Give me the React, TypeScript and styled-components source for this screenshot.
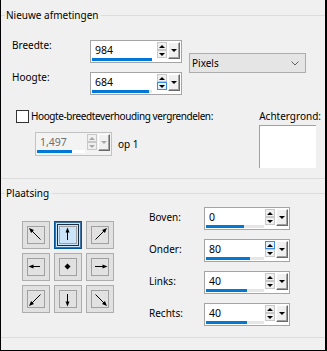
import React from "react";
import styled, { createGlobalStyle } from "styled-components";

const GlobalStyle = createGlobalStyle`
  html, body { margin: 0; padding: 0; background: #f0f0f0; }
  * { box-sizing: border-box; }
`;

const Window = styled.div`
  width: 327px;
  height: 351px;
  overflow: hidden;
  background: #f0f0f0;
  border-left: 1px solid #000;
  border-right: 2px solid #000;
  border-bottom: 1px solid #000;
  color: #000;
  font-family: "Noto Sans", "Liberation Sans", sans-serif;
  font-size: 10px;
  line-height: 14px;
`;

const Group = styled.section<{ $pb: number }>`
  border-bottom: 1px solid #dcdcdc;
  padding-bottom: ${(p) => p.$pb}px;
`;

const Legend = styled.div<{ $mt: number }>`
  display: flex;
  align-items: center;
  height: 15px;
  line-height: 15px;
  margin-top: ${(p) => p.$mt}px;
  white-space: nowrap;

  &::before {
    content: "";
    width: 4px;
    height: 1px;
    margin-right: 1px;
    background: #dcdcdc;
  }

  &::after {
    content: "";
    flex: 1;
    height: 1px;
    margin-left: 3px;
    background: #dcdcdc;
  }
`;

/* ---------- size section ---------- */

const SizeGrid = styled.div`
  display: grid;
  grid-template-columns: 78px 92px 124px;
  grid-template-rows: 23px 23px;
  row-gap: 9px;
  margin: 17px 0 0 11px;
`;

const TopLabel = styled.div`
  align-self: start;
  margin-top: -2px;
`;

const Select = styled.div`
  grid-column: 3;
  grid-row: 1 / 3;
  align-self: start;
  margin: 13px 0 0 7px;
  height: 20px;
  display: flex;
  align-items: center;
  justify-content: space-between;
  padding: 0 6px 0 2px;
  background: #e5e5e5;
  border: 1px solid #adadad;
`;

const LockSection = styled.div`
  display: flex;
  margin-top: 14px;
  padding: 0 4px 0 15px;
`;

const LeftCol = styled.div`
  display: flex;
  flex-direction: column;
`;

const CheckRow = styled.div`
  display: flex;
  align-items: center;
  gap: 2px;
  height: 14px;
  white-space: nowrap;
  letter-spacing: -0.4px;
`;

const CheckBox = styled.span`
  width: 13px;
  height: 13px;
  background: #fff;
  border: 1px solid #333;
`;

const RatioRow = styled.div`
  display: flex;
  align-items: center;
  gap: 6px;
  margin-top: 9px;
  padding-left: 19px;
`;

const RightCol = styled.div`
  display: flex;
  flex-direction: column;
  margin-left: auto;
  white-space: nowrap;
`;

const Swatch = styled.div`
  width: 57px;
  height: 43px;
  margin-top: 2px;
  background: #fff;
  border-left: 1px solid #a0a0a0;
  border-top: 1px solid #a0a0a0;
`;

/* ---------- spin box ---------- */

const SpinFrame = styled.div<{ $w: number; $h: number; $off?: boolean }>`
  display: flex;
  width: ${(p) => p.$w}px;
  height: ${(p) => p.$h}px;
  background: ${(p) => (p.$off ? "#f3f3f3" : "#fff")};
  border: 1px solid ${(p) => (p.$off ? "#c2c2c2" : "#a5a5a5")};
`;

const Field = styled.div`
  flex: 1;
  display: flex;
  flex-direction: column;
  padding-top: 2px;
`;

const Value = styled.div<{ $off?: boolean }>`
  padding-left: 4px;
  font-size: 10.5px;
  color: ${(p) => (p.$off ? "#6d6d6d" : "#000")};
`;

const Track = styled.div<{ $w: number; $off?: boolean }>`
  width: ${(p) => p.$w}px;
  height: 3px;
  margin: 1px 0 0 1px;
  background: ${(p) => (p.$off ? "#fff" : "#e6e6e6")};
`;

const Fill = styled.div`
  height: 100%;
  background: #0078d7;
`;

const SpinCol = styled.div`
  display: flex;
  flex-direction: column;
  width: 10px;
  padding-top: 1px;
  margin-right: 1px;
`;

const SpinBtn = styled.div<{ $dir: "up" | "down"; $hot?: boolean; $off?: boolean }>`
  width: 10px;
  height: 8px;
  display: flex;
  align-items: center;
  justify-content: center;
  background: ${(p) => (p.$hot ? "#e5f1fb" : "#f0f0f0")};
  border: 1px solid ${(p) => (p.$hot ? "#3c8fdc" : "#c8c8c8")};

  &::after {
    content: "";
    border-left: 3px solid transparent;
    border-right: 3px solid transparent;
    ${(p) => (p.$dir === "up" ? "border-bottom" : "border-top")}: 3px solid
      ${(p) => (p.$off ? "#a8a8a8" : "#000")};
  }
`;

const DropBtn = styled.div<{ $off?: boolean }>`
  width: 12px;
  height: 17px;
  margin: 1px 1px 0 0;
  display: flex;
  align-items: center;
  justify-content: center;
  background: #f0f0f0;
  border-top: 1px solid #fff;
  border-left: 1px solid #fff;
  border-right: 1px solid #696969;
  border-bottom: 1px solid #696969;
  box-shadow: inset -1px -1px 0 #a0a0a0;

  &::after {
    content: "";
    border-left: 3px solid transparent;
    border-right: 3px solid transparent;
    border-top: 3px solid ${(p) => (p.$off ? "#a8a8a8" : "#000")};
  }
`;

type SpinProps = {
  value: string;
  w: number;
  h?: number;
  track: number;
  fill: number;
  hot?: "up" | "down";
  off?: boolean;
};

function Spin({ value, w, h = 23, track, fill, hot, off }: SpinProps) {
  return (
    <SpinFrame $w={w} $h={h} $off={off}>
      <Field>
        <Value $off={off}>{value}</Value>
        <Track $w={track} $off={off}>
          <Fill style={{ width: fill }} />
        </Track>
      </Field>
      <SpinCol>
        <SpinBtn $dir="up" $hot={hot === "up"} $off={off} />
        <SpinBtn $dir="down" $hot={hot === "down"} $off={off} />
      </SpinCol>
      <DropBtn $off={off} />
    </SpinFrame>
  );
}

/* ---------- placement section ---------- */

const PlaceBody = styled.div`
  display: flex;
  align-items: flex-start;
  padding-top: 6px;
`;

const AnchorGrid = styled.div`
  display: grid;
  grid-template-columns: repeat(3, 28px);
  grid-auto-rows: 28px;
  gap: 4px;
  margin: 14px 0 0 21px;
`;

const AnchorBtn = styled.div<{ $on?: boolean }>`
  display: flex;
  align-items: center;
  justify-content: center;
  background: ${(p) => (p.$on ? "#cce4f7" : "#e1e1e1")};
  border: 1px solid ${(p) => (p.$on ? "#005499" : "#adadad")};
  box-shadow: ${(p) =>
    p.$on ? "inset 0 0 0 1px #3d6f9a, inset 0 0 0 2px #cce4f7, inset 0 0 0 3px #1b2f44" : "none"};
`;

const AnchorFace = styled.div`
  width: 18px;
  height: 18px;
  border: 1px solid #a0a0a0;

  svg {
    display: block;
  }
`;

const MarginGrid = styled.div`
  display: grid;
  grid-template-columns: 55px 86px;
  grid-auto-rows: 23px;
  row-gap: 9px;
  margin-left: 35px;
`;

const SideLabel = styled.div`
  align-self: center;
  margin-bottom: 4px;
`;

type Pt = [number, number];

const arrows: Record<string, [Pt, Pt] | null> = {
  nw: [[12.5, 12.5], [1, 1]],
  n: [[7.5, 13], [7.5, 0.5]],
  ne: [[3.5, 12.5], [15, 1]],
  w: [[12, 7.5], [0.5, 7.5]],
  c: null,
  e: [[3, 7.5], [15.5, 7.5]],
  sw: [[12.5, 3.5], [1, 15]],
  s: [[7.5, 3], [7.5, 15.5]],
  se: [[3.5, 3.5], [15, 15]],
};

function ArrowIcon({ dir }: { dir: string }) {
  const a = arrows[dir];
  if (!a) {
    return (
      <svg width="16" height="16" viewBox="0 0 16 16">
        <polygon points="7.5,4.5 10.5,7.5 7.5,10.5 4.5,7.5" fill="#000" />
      </svg>
    );
  }
  const [[fx, fy], [tx, ty]] = a;
  const dx = tx - fx;
  const dy = ty - fy;
  const len = Math.hypot(dx, dy);
  const ux = dx / len;
  const uy = dy / len;
  const bx = tx - ux * 5;
  const by = ty - uy * 5;
  const px = -uy * 2;
  const py = ux * 2;
  return (
    <svg width="16" height="16" viewBox="0 0 16 16">
      <line x1={fx} y1={fy} x2={bx + ux} y2={by + uy} stroke="#000" strokeWidth="1" />
      <polygon
        points={`${tx},${ty} ${bx + px},${by + py} ${bx - px},${by - py}`}
        fill="#000"
      />
    </svg>
  );
}

const anchorOrder = ["nw", "n", "ne", "w", "c", "e", "sw", "s", "se"];

const margins = [
  { label: "Boven:", value: "0", fill: 38 },
  { label: "Onder:", value: "80", fill: 44, hot: "up" as const },
  { label: "Links:", value: "40", fill: 41 },
  { label: "Rechts:", value: "40", fill: 41 },
];

export default function App() {
  return (
    <>
      <GlobalStyle />
      <Window>
        <Group $pb={10}>
          <Legend $mt={8}>Nieuwe afmetingen</Legend>
          <SizeGrid>
            <TopLabel>Breedte:</TopLabel>
            <Spin value="984" w={92} track={60} fill={60} />
            <Select>
              <span>Pixels</span>
              <svg width="8" height="5" viewBox="0 0 8 5">
                <polyline points="0.5,0.5 4,4 7.5,0.5" fill="none" stroke="#606060" />
              </svg>
            </Select>
            <TopLabel>Hoogte:</TopLabel>
            <Spin value="684" w={92} track={60} fill={57} hot="down" />
          </SizeGrid>
          <LockSection>
            <LeftCol>
              <CheckRow>
                <CheckBox />
                <span>Hoogte-breedteverhouding vergrendelen:</span>
              </CheckRow>
              <RatioRow>
                <Spin value="1,497" w={77} h={24} track={48} fill={35} off />
                <span>op 1</span>
              </RatioRow>
            </LeftCol>
            <RightCol>
              <span>Achtergrond:</span>
              <Swatch />
            </RightCol>
          </LockSection>
        </Group>
        <Group $pb={11}>
          <Legend $mt={7}>Plaatsing</Legend>
          <PlaceBody>
            <AnchorGrid>
              {anchorOrder.map((d) => (
                <AnchorBtn key={d} $on={d === "n"}>
                  <AnchorFace>
                    <ArrowIcon dir={d} />
                  </AnchorFace>
                </AnchorBtn>
              ))}
            </AnchorGrid>
            <MarginGrid>
              {margins.map((m) => (
                <React.Fragment key={m.label}>
                  <SideLabel>{m.label}</SideLabel>
                  <Spin value={m.value} w={86} track={58} fill={m.fill} hot={m.hot} />
                </React.Fragment>
              ))}
            </MarginGrid>
          </PlaceBody>
        </Group>
      </Window>
    </>
  );
}
